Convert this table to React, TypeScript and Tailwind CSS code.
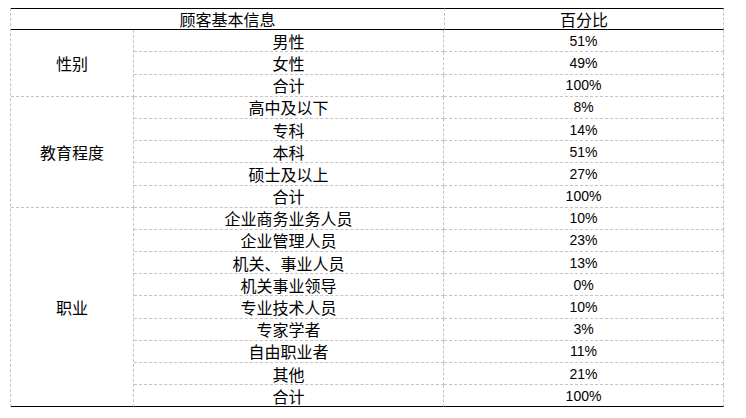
const groups = [
  {
    name: "性别",
    rows: [
      ["男性", "51%"],
      ["女性", "49%"],
      ["合计", "100%"],
    ],
  },
  {
    name: "教育程度",
    rows: [
      ["高中及以下", "8%"],
      ["专科", "14%"],
      ["本科", "51%"],
      ["硕士及以上", "27%"],
      ["合计", "100%"],
    ],
  },
  {
    name: "职业",
    rows: [
      ["企业商务业务人员", "10%"],
      ["企业管理人员", "23%"],
      ["机关、事业人员", "13%"],
      ["机关事业领导", "0%"],
      ["专业技术人员", "10%"],
      ["专家学者", "3%"],
      ["自由职业者", "11%"],
      ["其他", "21%"],
      ["合计", "100%"],
    ],
  },
];

const cjk = "text-[16px] [font-family:'Noto_Sans_CJK_SC',sans-serif]";
const num = "text-[14px] [font-family:'Liberation_Sans',Arial,sans-serif]";
// dashed grey right edge for each cell
const rightDash = "border-r border-r-[#c4c4c4] [border-right-style:dashed]";
const bottomDash = "border-b border-b-[#c4c4c4] [border-bottom-style:dashed]";
const bottomSolid = "border-b border-b-black";

export default function App() {
  let rowStart = 2;
  return (
    <div className="w-[746px] h-[418px] bg-white text-black pt-[8px] pl-[10px]">
      <div className="grid w-[713px] grid-cols-[123px_310px_280px] auto-rows-[22.2px] border-l border-l-[#c4c4c4] [border-left-style:dashed] leading-none">
        <div className={`col-span-2 flex items-center justify-center border-t border-t-black ${bottomSolid} ${cjk}`}>
          顾客基本信息
        </div>
        <div className={`flex items-center justify-center border-t border-t-black ${bottomSolid} border-l border-l-[#c4c4c4] [border-left-style:dashed] ${rightDash} ${cjk}`}>
          百分比
        </div>
        {groups.map((g, gi) => {
          const last = gi === groups.length - 1;
          const start = rowStart;
          rowStart += g.rows.length;
          return [
            <div
              key={g.name}
              style={{ gridRow: `${start} / span ${g.rows.length}`, gridColumn: 1 }}
              className={`flex items-center justify-center ${rightDash} ${last ? bottomSolid : bottomDash} ${cjk}`}
            >
              {g.name}
            </div>,
            ...g.rows.map(([label, pct], ri) => {
              const bottom = last && ri === g.rows.length - 1 ? bottomSolid : bottomDash;
              return [
                <div
                  key={`${g.name}-${ri}-a`}
                  style={{ gridRow: start + ri, gridColumn: 2 }}
                  className={`flex items-center justify-center ${rightDash} ${bottom} ${cjk}`}
                >
                  {label}
                </div>,
                <div
                  key={`${g.name}-${ri}-b`}
                  style={{ gridRow: start + ri, gridColumn: 3 }}
                  className={`flex items-center justify-center ${rightDash} ${bottom} ${num}`}
                >
                  {pct}
                </div>,
              ];
            }),
          ];
        })}
      </div>
    </div>
  );
}
